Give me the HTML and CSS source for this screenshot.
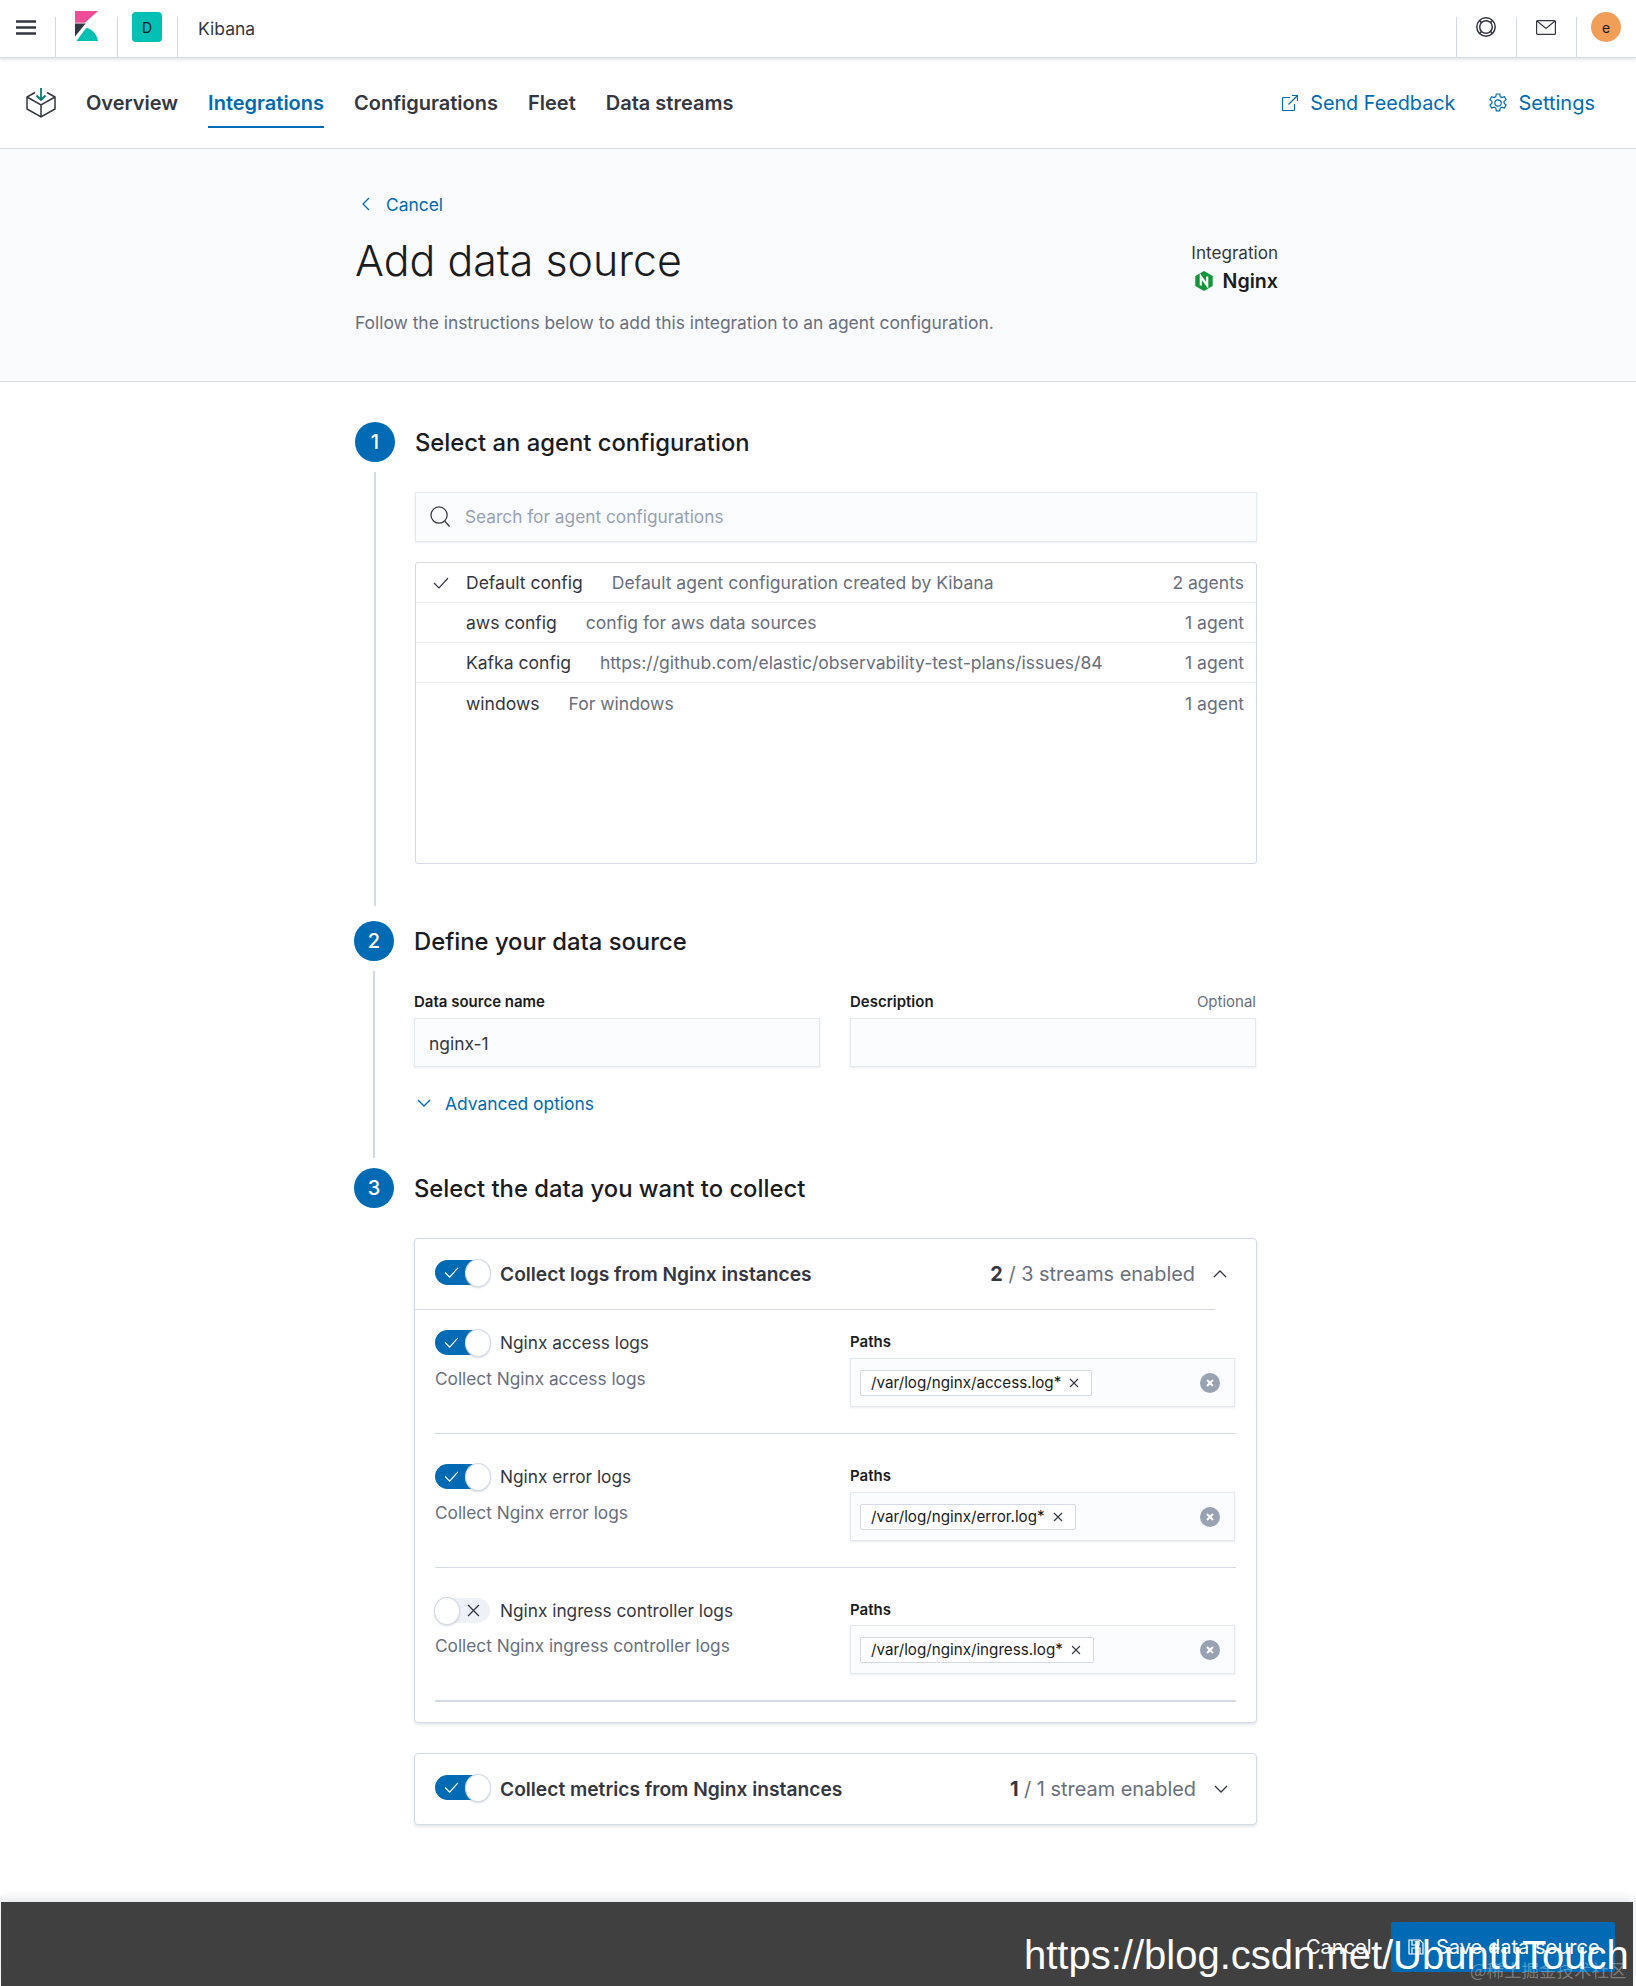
FILE: index.html
```html
<!DOCTYPE html>
<html lang="en">
<head>
<meta charset="utf-8">
<title>Add data source - Kibana</title>
<link rel="stylesheet" href="styles.css">
</head>
<body>
<header class="topbar">
  <div class="tb-burger">
    <svg class="ico-burger" viewBox="0 0 20 15"><path d="M0 1.500h20M0 7.500h20M0 13.500h20"/></svg>
  </div>
  <div class="tb-cell tb-logo">
    <svg class="ico-k" viewBox="0 0 23 30"><path fill="#f04e98" d="M0 0h23L10 11.800H0z"/><path fill="#343741" d="M0 12.600h10.600L0 25.600z"/><path fill="#00bfb3" d="M1.500 30h21.500c-1.200-6.500-5.500-11.500-11.700-13.200z"/></svg>
  </div>
  <div class="tb-cell tb-space"><span class="space-badge">D</span></div>
  <div class="tb-cell tb-crumb">Kibana</div>
  <div class="tb-right">
    <div class="tb-cell tb-icon">
      <svg viewBox="0 0 20 20" class="ico-20 ico-dark ico-help"><circle cx="10" cy="10" r="9.200"/><circle cx="10" cy="10" r="6.300"/><path d="M3.500 3.500L5.600 5.600M16.500 3.500L14.400 5.600M3.500 16.500L5.600 14.400M16.500 16.500L14.400 14.400"/></svg>
    </div>
    <div class="tb-cell tb-icon">
      <svg viewBox="0 0 20 15" class="ico-mail ico-dark"><rect x=".6" y=".6" width="18.800" height="13.800" rx="1"/><path d="M1 1l9 7.500L19 1"/></svg>
    </div>
    <div class="tb-cell tb-avatar"><span class="avatar">e</span></div>
  </div>
</header>

<nav class="subnav">
  <svg class="ico-cube" viewBox="0 0 32 32"><path class="cube-line" d="M10 5.500L2 10v12l14 8 14-8V10l-8-4.500M2 10l14 8 14-8M16 18v12"/><path class="cube-arrow" d="M16 1v12M11.500 8.500L16 13l4.500-4.500"/></svg>
  <a class="tab">Overview</a>
  <a class="tab tab-active">Integrations</a>
  <a class="tab">Configurations</a>
  <a class="tab">Fleet</a>
  <a class="tab">Data streams</a>
  <div class="subnav-right">
    <a class="sublink">
      <svg viewBox="0 0 16 16" class="ico-16 ico-blue"><path d="M8 2.500H1.500a1 1 0 0 0-1 1v11a1 1 0 0 0 1 1h10a1 1 0 0 0 1-1V9M6.500 9.500L15.500.5M10 .5h5.500V6"/></svg>
      Send Feedback
    </a>
    <a class="sublink sublink-tight">
      <svg viewBox="0 0 20 20" class="ico-20 ico-blue"><circle cx="10" cy="10" r="3.200"/><path d="M8.300 1h3.400l.5 2.600 1.700 1 2.500-.9 1.700 2.900-2 1.800v1.900l2 1.800-1.700 2.900-2.500-.9-1.700 1-.5 2.800H8.300l-.5-2.800-1.700-1-2.500.9-1.700-2.900 2-1.800V8.400l-2-1.800 1.700-2.900 2.500.9 1.700-1z"/></svg>
      Settings
    </a>
  </div>
</nav>

<section class="hero">
  <div class="hero-left">
    <a class="back">
      <svg viewBox="0 0 8 14" class="ico-back ico-blue"><path d="M7 1L1 7l6 6"/></svg>
      Cancel
    </a>
    <h1 class="page-title">Add data source</h1>
    <p class="page-desc">Follow the instructions below to add this integration to an agent configuration.</p>
  </div>
  <div class="hero-right">
    <div class="int-label">Integration</div>
    <div class="int-name">
      <svg viewBox="0 0 18 20" class="ico-nginx"><path fill="#129639" d="M9 0l8.700 5v10L9 20 .3 15V5z"/><path fill="none" stroke="#fff" stroke-width="2.200" d="M5.800 14.500v-9l6.400 9v-9"/></svg>
      Nginx
    </div>
  </div>
</section>

<main class="steps">
  <section class="step step-one">
    <div class="rail"><span class="step-num">1</span><span class="rail-line"></span></div>
    <div class="step-body body-one">
      <h2 class="step-title">Select an agent configuration</h2>
      <div class="search">
        <svg viewBox="0 0 22 22" class="ico-search"><circle cx="9.500" cy="9.500" r="8.500"/><path d="M15.500 16l5 5.500"/></svg>
        <span class="placeholder">Search for agent configurations</span>
      </div>
      <div class="list">
        <div class="list-row">
          <svg viewBox="0 0 16 12" class="ico-check"><path d="M1 6l5 5L15 1"/></svg>
          <span class="cfg-name">Default config</span>
          <span class="cfg-desc">Default agent configuration created by Kibana</span>
          <span class="cfg-count">2 agents</span>
        </div>
        <div class="list-row">
          <span class="cfg-name cfg-indent">aws config</span>
          <span class="cfg-desc">config for aws data sources</span>
          <span class="cfg-count">1 agent</span>
        </div>
        <div class="list-row">
          <span class="cfg-name cfg-indent">Kafka config</span>
          <span class="cfg-desc">https://github.com/elastic/observability-test-plans/issues/84</span>
          <span class="cfg-count">1 agent</span>
        </div>
        <div class="list-row list-row-last">
          <span class="cfg-name cfg-indent">windows</span>
          <span class="cfg-desc">For windows</span>
          <span class="cfg-count">1 agent</span>
        </div>
      </div>
    </div>
  </section>

  <section class="step step-two">
    <div class="rail"><span class="step-num">2</span><span class="rail-line"></span></div>
    <div class="step-body body-two">
      <h2 class="step-title">Define your data source</h2>
      <div class="fields">
        <div class="field">
          <div class="field-label"><span>Data source name</span></div>
          <div class="input">nginx-1</div>
        </div>
        <div class="field">
          <div class="field-label"><span>Description</span><span class="optional">Optional</span></div>
          <div class="input"></div>
        </div>
      </div>
      <a class="advanced">
        <svg viewBox="0 0 14 8" class="ico-adv ico-blue"><path d="M1 1l6 6 6-6"/></svg>
        Advanced options
      </a>
    </div>
  </section>

  <section class="step">
    <div class="rail"><span class="step-num">3</span></div>
    <div class="step-body">
      <h2 class="step-title">Select the data you want to collect</h2>

      <div class="panel panel-logs">
        <div class="panel-head head-divided">
          <span class="toggle"><svg viewBox="0 0 16 12" class="tg-check"><path d="M1 6l5 5L15 1"/></svg><span class="knob"></span></span>
          <span class="panel-title">Collect logs from Nginx instances</span>
          <span class="panel-count"><b>2</b> / 3 streams enabled</span>
          <svg viewBox="0 0 14 8" class="ico-chev"><path d="M1 7l6-6 6 6"/></svg>
        </div>

        <div class="stream stream-first">
          <div class="stream-left">
            <div class="stream-toggle">
              <span class="toggle"><svg viewBox="0 0 16 12" class="tg-check"><path d="M1 6l5 5L15 1"/></svg><span class="knob"></span></span>
              <span class="stream-name">Nginx access logs</span>
            </div>
            <p class="stream-desc">Collect Nginx access logs</p>
          </div>
          <div class="stream-right">
            <div class="paths-label">Paths</div>
            <div class="combo">
              <span class="chip">/var/log/nginx/access.log*<svg viewBox="0 0 10 10" class="chip-x"><path d="M1 1l8 8M9 1l-8 8"/></svg></span>
              <svg viewBox="0 0 20 20" class="clear"><circle cx="10" cy="10" r="10" fill="#98a2b3"/><path d="M7 7l6 6M13 7l-6 6" stroke="#fff" stroke-width="2"/></svg>
            </div>
          </div>
        </div>

        <div class="stream">
          <div class="stream-left">
            <div class="stream-toggle">
              <span class="toggle"><svg viewBox="0 0 16 12" class="tg-check"><path d="M1 6l5 5L15 1"/></svg><span class="knob"></span></span>
              <span class="stream-name">Nginx error logs</span>
            </div>
            <p class="stream-desc">Collect Nginx error logs</p>
          </div>
          <div class="stream-right">
            <div class="paths-label">Paths</div>
            <div class="combo">
              <span class="chip">/var/log/nginx/error.log*<svg viewBox="0 0 10 10" class="chip-x"><path d="M1 1l8 8M9 1l-8 8"/></svg></span>
              <svg viewBox="0 0 20 20" class="clear"><circle cx="10" cy="10" r="10" fill="#98a2b3"/><path d="M7 7l6 6M13 7l-6 6" stroke="#fff" stroke-width="2"/></svg>
            </div>
          </div>
        </div>

        <div class="stream stream-last">
          <div class="stream-left">
            <div class="stream-toggle">
              <span class="toggle toggle-off"><span class="knob"></span><svg viewBox="0 0 12 12" class="tg-x"><path d="M1 1l10 10M11 1L1 11"/></svg></span>
              <span class="stream-name">Nginx ingress controller logs</span>
            </div>
            <p class="stream-desc">Collect Nginx ingress controller logs</p>
          </div>
          <div class="stream-right">
            <div class="paths-label">Paths</div>
            <div class="combo">
              <span class="chip">/var/log/nginx/ingress.log*<svg viewBox="0 0 10 10" class="chip-x"><path d="M1 1l8 8M9 1l-8 8"/></svg></span>
              <svg viewBox="0 0 20 20" class="clear"><circle cx="10" cy="10" r="10" fill="#98a2b3"/><path d="M7 7l6 6M13 7l-6 6" stroke="#fff" stroke-width="2"/></svg>
            </div>
          </div>
        </div>
      </div>

      <div class="panel panel-metrics">
        <div class="panel-head">
          <span class="toggle"><svg viewBox="0 0 16 12" class="tg-check"><path d="M1 6l5 5L15 1"/></svg><span class="knob"></span></span>
          <span class="panel-title">Collect metrics from Nginx instances</span>
          <span class="panel-count"><b>1</b> / 1 stream enabled</span>
          <svg viewBox="0 0 14 8" class="ico-chev"><path d="M1 1l6 6 6-6"/></svg>
        </div>
      </div>
    </div>
  </section>
</main>

<footer class="actionbar">
  <a class="bar-cancel">Cancel</a>
  <a class="bar-save">
    <svg viewBox="0 0 16 16" class="ico-save"><path d="M1 1h11l3 3v11H1zM4 1v5h7V1M4 15V9h8v6"/></svg>
    Save data source
  </a>
  <span class="watermark">https://blog.csdn.net/UbuntuTouch</span>
  <span class="watermark-cn">@稀土掘金技术社区</span>
</footer>
</body>
</html>
```
FILE: styles.css
```css
* { box-sizing: border-box; }
html, body { margin: 0; padding: 0; }
body {
  width: 1636px;
  height: 1986px;
  overflow: hidden;
  background: #fff;
  color: #343741;
  font-family: Inter, "Liberation Sans", sans-serif;
  font-size: 17.4px;
  display: flex;
  flex-direction: column;
}
svg { display: block; flex: none; fill: none; }

/* top bar */
.topbar {
  height: 58px;
  flex: none;
  display: flex;
  align-items: flex-end;
  background: #fff;
  border-bottom: 1px solid #d3dae6;
  box-shadow: 0 2px 3px rgba(152, 162, 179, .25);
  position: relative;
}
.tb-burger { width: 55px; height: 57px; padding: 20px 0 0 16px; }
.ico-burger { width: 20px; height: 15px; stroke: #343741; stroke-width: 2.300; }
.tb-cell {
  height: 40px;
  border-left: 1px solid #d3dae6;
  position: relative;
}
.tb-logo { width: 62px; }
.ico-k { width: 23px; height: 30px; margin: -6px 0 0 19px; }
.tb-space { width: 60px; }
.space-badge {
  display: flex;
  align-items: center;
  justify-content: center;
  width: 30px;
  height: 30px;
  margin: -5px 0 0 14px;
  border-radius: 4px;
  background: #00bfb3;
  color: #1a1c21;
  font-size: 14px;
}
.tb-crumb { padding: 2px 0 0 20px; line-height: 20px; font-size: 17.500px; color: #343741; }
.tb-right { margin-left: auto; display: flex; width: 180px; }
.tb-icon { width: 60px; }
.tb-icon svg { margin-left: 19px; }
.ico-help { stroke-width: 1.500; }
.ico-20 { width: 20px; height: 20px; }
.ico-16 { width: 16px; height: 16px; stroke-width: 1.200; }
.ico-20.ico-blue { stroke-width: 1.200; }
.tb-icon .ico-mail { width: 20px; height: 15px; margin-top: 3px; stroke-width: 1.200; }
.ico-dark { stroke: #343741; }
.ico-blue { stroke: #006bb4; }
.tb-avatar { flex: 1; }
.avatar {
  display: flex;
  align-items: center;
  justify-content: center;
  width: 30px;
  height: 30px;
  margin: -5px 0 0 14px;
  border-radius: 50%;
  background: #f19f58;
  color: #1a1c21;
  font-size: 14px;
}

/* sub navigation */
.subnav {
  height: 91px;
  flex: none;
  display: flex;
  align-items: center;
  padding: 0 41px 0 25px;
  gap: 30px;
  background: #fff;
  border-bottom: 1px solid #d3dae6;
}
.ico-cube { width: 32px; height: 32px; margin-right: -1px; }
.cube-line { stroke: #343741; stroke-width: 1.500; }
.cube-arrow { stroke: #017d73; stroke-width: 1.800; }
.tab {
  font-size: 20px;
  font-weight: 600;
  color: #343741;
  height: 92px;
  line-height: 92px;
  position: relative;
}
.tab-active { color: #006bb4; }
.tab-active::after {
  content: "";
  position: absolute;
  left: 0;
  right: 0;
  top: 69px;
  height: 2px;
  background: #006bb4;
}
.subnav-right { margin-left: auto; display: flex; gap: 33px; }
.sublink {
  display: flex;
  align-items: center;
  gap: 12px;
  font-size: 19.800px;
  color: #006bb4;
}
.sublink-tight { gap: 10px; font-size: 20px; }

/* hero */
.hero {
  height: 233px;
  flex: none;
  padding: 42px 0 0 355px;
  display: flex;
  background: #fafbfd;
  border-bottom: 1px solid #d3dae6;
}
.hero-left { width: 800px; }
.back {
  display: flex;
  align-items: center;
  gap: 16px;
  padding-left: 7px;
  height: 26px;
  font-size: 17.400px;
  color: #006bb4;
}
.ico-back { width: 8px; height: 14px; stroke-width: 1.300; }
.page-title {
  margin: 15px 0 0;
  font-size: 42.900px;
  line-height: 56px;
  font-weight: 300;
  color: #1a1c21;
}
.page-desc { margin: 22px 0 0; font-size: 17.400px; line-height: 26px; color: #69707d; }
.hero-right {
  width: 123px;
  padding-top: 49px;
  display: flex;
  flex-direction: column;
  align-items: flex-end;
}
.int-label { font-size: 17.100px; line-height: 26px; color: #343741; }
.int-name {
  display: flex;
  align-items: center;
  gap: 10px;
  margin-top: 1px;
  font-size: 19.600px;
  line-height: 28px;
  font-weight: 600;
  color: #1a1c21;
}
.ico-nginx { width: 18px; height: 20px; }

/* steps */
.steps { width: 903px; margin-left: 354px; padding-top: 40px; }
.step { display: flex; gap: 20px; }
.step-one { margin-left: 1px; margin-bottom: 15px; }
.step-two { margin-bottom: 10px; }
.rail { width: 40px; flex: none; display: flex; flex-direction: column; align-items: center; }
.step-num {
  flex: none;
  display: flex;
  align-items: center;
  justify-content: center;
  width: 40px;
  height: 40px;
  border-radius: 50%;
  background: #006bb4;
  color: #fff;
  font-size: 20px;
  font-weight: 500;
}
.rail-line { flex: 1; width: 2px; margin-top: 10px; background: #d3dae6; }
.step-body { flex: 1; min-width: 0; }
.body-one { padding-bottom: 42px; }
.body-two { padding-bottom: 43px; }
.step-title {
  margin: 0;
  height: 40px;
  line-height: 42px;
  font-size: 23.800px;
  font-weight: 500;
  color: #1a1c21;
}

/* agent config picker */
.search {
  display: flex;
  align-items: center;
  gap: 14px;
  height: 50px;
  margin-top: 30px;
  padding: 0 0 2px 14px;
  background: #fbfcfd;
  border: 1px solid #e4e8ef;
  box-shadow: 0 1px 2px rgba(152, 162, 179, .2);
}
.ico-search { width: 21px; height: 21px; stroke: #343741; stroke-width: 1.300; }
.placeholder { color: #98a2b3; font-size: 17.300px; }
.list {
  height: 302px;
  margin-top: 20px;
  background: #fff;
  border: 1px solid #d3dae6;
  border-radius: 3px;
}
.list-row {
  display: flex;
  align-items: center;
  height: 40px;
  padding: 0 12px 0 17px;
  border-bottom: 1px solid #eef1f6;
  font-size: 17.550px;
}
.list-row-last { border-bottom: 0; }
.ico-check { width: 16px; height: 12px; margin-right: 17px; stroke: #343741; stroke-width: 1.200; }
.cfg-name { color: #343741; margin-right: 29px; }
.cfg-indent { margin-left: 33px; }
.cfg-desc { color: #69707d; }
.cfg-count { margin-left: auto; color: #69707d; }

/* data source form */
.fields { display: grid; grid-template-columns: 406px 406px; column-gap: 30px; margin-top: 31px; }
.field-label {
  display: flex;
  justify-content: space-between;
  height: 26px;
  line-height: 20px;
  font-size: 15px;
  font-weight: 600;
  color: #1a1c21;
}
.optional { font-weight: 400; color: #69707d; font-size: 15px; }
.input {
  height: 49px;
  line-height: 49px;
  padding-left: 14px;
  background: #fbfcfd;
  border: 1px solid #e4e8ef;
  box-shadow: 0 1px 2px rgba(152, 162, 179, .2);
  font-size: 17.400px;
  color: #343741;
}
.advanced {
  display: flex;
  align-items: center;
  gap: 14px;
  height: 24px;
  margin-top: 24px;
  padding-left: 3px;
  font-size: 17.400px;
  color: #006bb4;
}
.ico-adv { width: 14px; height: 8px; stroke-width: 1.400; }

/* collection panels */
.panel {
  background: #fff;
  border: 1px solid #d3dae6;
  border-radius: 4px;
  box-shadow: 0 2px 3px rgba(152, 162, 179, .25);
}
.panel-logs { height: 485px; margin-top: 30px; }
.panel-metrics { height: 72px; margin-top: 30px; }
.panel-head {
  display: flex;
  align-items: center;
  height: 70px;
  padding: 0 28px 3px 20px;
}
.head-divided { height: 71px; border-bottom: 1px solid #d3dae6; margin-right: 41px; padding-right: 0; }
.head-divided .ico-chev { margin-right: -12px; }
.toggle {
  flex: none;
  display: flex;
  align-items: center;
  justify-content: flex-end;
  position: relative;
  width: 55px;
  height: 25px;
  border-radius: 13px;
  background: #006bb4;
}
.tg-check { position: absolute; left: 9px; top: 7px; width: 15px; height: 11px; stroke: #fff; stroke-width: 1.300; }
.knob {
  width: 26px;
  height: 28px;
  margin: -2px -1px -2px 0;
  border-radius: 50%;
  background: #fff;
  border: 1px solid #d3dae6;
  box-shadow: 0 1px 2px rgba(152, 162, 179, .4);
}
.toggle-off { justify-content: space-between; background: #eef1f6; }
.toggle-off .knob { margin: -2px 0 -2px -1px; }
.tg-x { width: 13px; height: 13px; margin-right: 10px; stroke: #343741; stroke-width: 1.200; }
.panel-title { margin: 3px 0 0 10px; font-size: 19.200px; font-weight: 600; color: #343741; }
.panel-count { margin: 3px 18px 0 auto; font-size: 19.900px; color: #69707d; }
.panel-count b { font-weight: 700; color: #343741; }
.ico-chev { width: 14px; height: 8px; margin-top: 3px; stroke: #343741; stroke-width: 1.300; }
.stream {
  display: flex;
  height: 134px;
  margin: 0 20px;
  padding-top: 30px;
  border-bottom: 1px solid #d3dae6;
}
.stream-first { height: 124px; padding-top: 20px; }
.stream-last { border-bottom-width: 2px; }
.stream-last .stream-desc { margin-top: 10px; }
.stream-last .paths-label { height: 27px; }
.stream-left { width: 415px; }
.stream-toggle { display: flex; align-items: center; gap: 10px; }
.stream-name { font-size: 17.250px; color: #343741; }
.stream-desc { margin: 11px 0 0; font-size: 17.250px; line-height: 26px; color: #69707d; }
.stream-right { width: 385px; }
.paths-label { height: 28px; line-height: 24px; font-size: 15px; font-weight: 600; color: #1a1c21; }
.combo {
  display: flex;
  align-items: center;
  justify-content: space-between;
  height: 49px;
  padding: 0 14px 0 9px;
  background: #fbfcfd;
  border: 1px solid #e4e8ef;
  box-shadow: 0 1px 2px rgba(152, 162, 179, .2);
}
.chip {
  display: flex;
  align-items: center;
  gap: 8px;
  height: 26px;
  padding: 0 12px 0 10px;
  background: #fff;
  border: 1px solid #d3dae6;
  border-radius: 2px;
  font-size: 15.200px;
  color: #1a1c21;
}
.chip-x { width: 10px; height: 10px; stroke: #343741; stroke-width: 1.100; }
.clear { width: 20px; height: 20px; }

/* bottom bar */
.actionbar {
  position: relative;
  margin: auto 3px 0 1px;
  height: 84px;
  flex: none;
  background: #404040;
  box-shadow: 0 -4px 8px rgba(152, 162, 179, .25);
}
.bar-cancel { position: absolute; left: 1305px; top: 33px; color: #fff; font-size: 20px; line-height: 24px; }
.bar-save {
  position: absolute;
  left: 1390px;
  top: 20px;
  width: 224px;
  height: 50px;
  padding-left: 17px;
  display: flex;
  align-items: center;
  gap: 12px;
  background: #006bb4;
  border-radius: 3px;
  color: #fff;
  font-size: 20px;
}
.ico-save { width: 16px; height: 16px; stroke: #fff; stroke-width: 1.200; }
.watermark {
  position: absolute;
  left: 1023px;
  top: 26px;
  color: #fff;
  font-family: "Liberation Sans", Arial, sans-serif;
  font-size: 40px;
  line-height: 54px;
  white-space: nowrap;
}
.watermark-cn {
  position: absolute;
  left: 1469px;
  top: 56px;
  color: rgba(255, 255, 255, .32);
  font-family: "Noto Sans CJK SC", "Liberation Sans", sans-serif;
  font-size: 17.500px;
  line-height: 24px;
  white-space: nowrap;
}
```
